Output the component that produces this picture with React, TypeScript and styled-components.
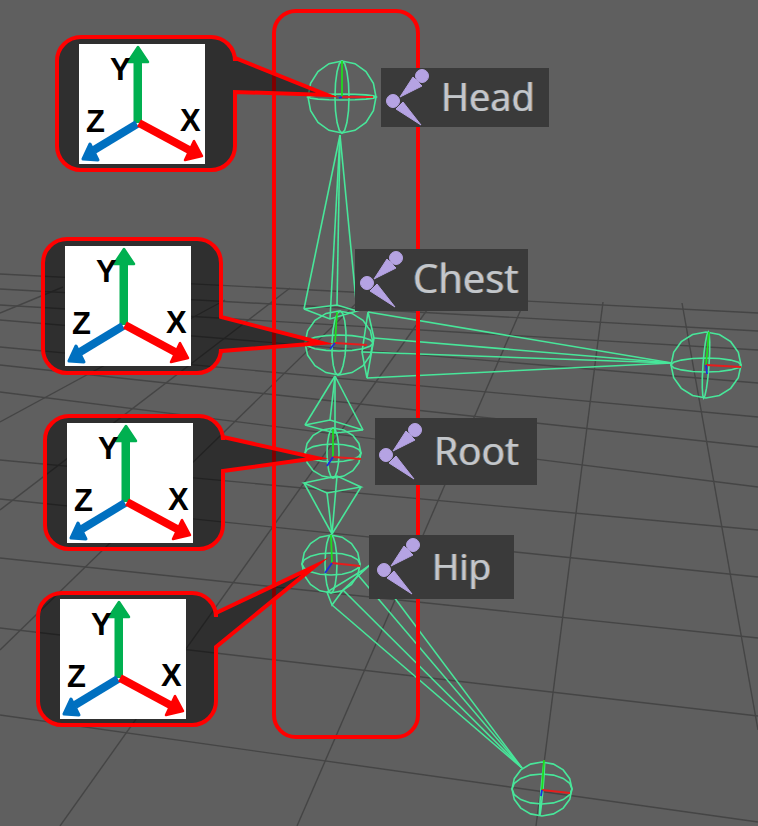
import styled, { createGlobalStyle } from "styled-components";

// Bone orientation diagram: viewport drawing, callouts and joint labels

type Point = [number, number];

const GlobalStyle = createGlobalStyle`
  html, body {
    margin: 0;
    padding: 0;
    background: #5f5f5f;
  }
`;

const Stage = styled.div`
  position: relative;
  width: 758px;
  height: 826px;
  overflow: hidden;
  background: #5f5f5f;
  font-family: "Open Sans", "Liberation Sans", sans-serif;
`;

const Viewport = styled.svg`
  position: absolute;
  inset: 0;
  display: block;
`;

const HighlightBox = styled.div`
  position: absolute;
  left: 272px;
  top: 9px;
  width: 148px;
  height: 730px;
  box-sizing: border-box;
  border: 4px solid #ff0000;
  border-radius: 24px;
`;

const Callout = styled.div<{ $x: number; $y: number; $w: number; $h: number }>`
  position: absolute;
  left: ${({ $x }) => $x}px;
  top: ${({ $y }) => $y}px;
  width: ${({ $w }) => $w}px;
  height: ${({ $h }) => $h}px;
`;

const Bubble = styled.svg`
  position: absolute;
  inset: 0;
  width: 100%;
  height: 100%;
  overflow: visible;
`;

const AxisPanel = styled.div<{ $x: number; $y: number }>`
  position: absolute;
  left: ${({ $x }) => $x}px;
  top: ${({ $y }) => $y}px;
  width: 126px;
  height: 120px;
  background: #ffffff;
`;

const AxisDrawing = styled.svg`
  display: block;
  width: 126px;
  height: 120px;
`;

const AxisLetter = styled.span<{ $x: number; $y: number }>`
  position: absolute;
  left: ${({ $x }) => $x}px;
  top: ${({ $y }) => $y}px;
  font-family: "Liberation Sans", Arial, sans-serif;
  font-weight: 700;
  font-size: 31px;
  line-height: 1;
  color: #000000;
`;

const BoneLabel = styled.div<{ $x: number; $y: number; $w: number; $h: number; $pad: number; $gap: number }>`
  position: absolute;
  left: ${({ $x }) => $x}px;
  top: ${({ $y }) => $y}px;
  width: ${({ $w }) => $w}px;
  height: ${({ $h }) => $h}px;
  display: flex;
  align-items: center;
  gap: ${({ $gap }) => $gap}px;
  padding-left: ${({ $pad }) => $pad}px;
  box-sizing: border-box;
  background: #3a3a3a;
`;

const BoneIcon = styled.svg`
  flex: none;
  display: block;
  filter: blur(0.5px);
`;

const BoneName = styled.span<{ $size: number }>`
  margin-bottom: 4px;
  font-size: ${({ $size }) => $size}px;
  line-height: 1;
  color: #c4c7ca;
  filter: blur(0.55px);
  text-shadow: -1px 0 rgba(90, 160, 230, 0.6), 1px 0 rgba(235, 165, 90, 0.6);
`;

const GRID_ROWS: [number, number][] = [
  [274, 313], [289, 331], [305, 350], [320, 383], [347, 417], [365, 447],
  [392, 487], [460, 530], [499, 577], [558, 638], [628, 716], [715, 822],
];

const GRID_SPOKES: [Point, Point][] = [
  [[60, 826], [432, 303]],
  [[297, 826], [525, 300]],
  [[603, 302], [536, 826]],
  [[682, 303], [758, 730]],
  [[0, 650], [370, 290]],
  [[0, 510], [290, 288]],
  [[0, 422], [225, 300]],
  [[0, 313], [63, 287]],
];

const BONES: { apex: Point; base: Point[]; rim: Point[] }[] = [
  {
    apex: [340, 135],
    base: [[304, 309], [337, 305], [357, 311], [330, 319]],
    rim: [[304, 309], [337, 305], [357, 311], [330, 319]],
  },
  {
    apex: [672, 363],
    base: [[368, 312], [374, 338], [367, 378], [362, 352]],
    rim: [[368, 312], [374, 338], [367, 378], [362, 352]],
  },
  {
    apex: [335, 376],
    base: [[305, 425], [330, 420], [363, 430], [335, 433]],
    rim: [[305, 425], [330, 420], [363, 430], [335, 433]],
  },
  {
    apex: [332, 534],
    base: [[304, 483], [337, 476], [361, 487], [327, 493]],
    rim: [[304, 483], [337, 476], [361, 487], [327, 493]],
  },
  // Hip to foot: the wide end of this bone sits partly under the Hip label
  {
    apex: [522, 768],
    base: [[332, 605], [343, 590], [358, 575], [370, 565]],
    rim: [[332, 605], [327, 592], [363, 570], [370, 565], [343, 590]],
  },
];

const SPHERES = [
  { cx: 342, cy: 97, rx: 34, ry: 36, lat: 3, lon: 7, tilt: 0, o: [342, 97], g: [342, 61], r: [373, 97], b: [339, 98] },
  { cx: 339, cy: 343, rx: 34, ry: 32, lat: 8, lon: 7, tilt: 2, o: [335, 343], g: [337, 312], r: [367, 345], b: [330, 349] },
  { cx: 706, cy: 365, rx: 35, ry: 33, lat: 7, lon: 3, tilt: 4, o: [706, 365], g: [709, 332], r: [741, 367], b: [707, 374] },
  { cx: 333, cy: 453, rx: 28, ry: 25, lat: 9, lon: 6, tilt: 0, o: [333, 457], g: [333, 429], r: [361, 459], b: [327, 466] },
  { cx: 331, cy: 564, rx: 29, ry: 29, lat: 11, lon: 6, tilt: 0, o: [332, 563], g: [331, 535], r: [360, 566], b: [325, 573] },
  { cx: 542, cy: 789, rx: 30, ry: 27, lat: 15, lon: 1, tilt: 5, o: [542, 790], g: [544, 760], r: [570, 793], b: [541, 796] },
];

const CALLOUTS = [
  { x: 57, y: 37, w: 178, h: 133, panel: [22, 7], tail: [21, 55, 270, 58] },
  { x: 43, y: 239, w: 178, h: 134, panel: [22, 7], tail: [78, 112, 279, 104] },
  { x: 45, y: 416, w: 178, h: 133, panel: [22, 7], tail: [21, 55, 272, 42] },
  { x: 38, y: 593, w: 178, h: 132, panel: [22, 6], tail: [20, 54, 277, -27] },
];

const LABELS = [
  { name: "Head", x: 381, y: 68, w: 168, h: 59, pad: 5, gap: 7, size: 38 },
  { name: "Chest", x: 355, y: 249, w: 173, h: 62, pad: 5, gap: 5, size: 40 },
  { name: "Root", x: 375, y: 418, w: 162, h: 67, pad: 4, gap: 7, size: 39 },
  { name: "Hip", x: 369, y: 535, w: 145, h: 64, pad: 8, gap: 7, size: 37 },
];

// Low-poly ellipse, the way the viewport draws its joint gizmos
function ring(cx: number, cy: number, rx: number, ry: number) {
  const pts: string[] = [];
  for (let i = 0; i < 16; i++) {
    const a = (i / 16) * Math.PI * 2;
    pts.push(`${(cx + rx * Math.cos(a)).toFixed(1)},${(cy + ry * Math.sin(a)).toFixed(1)}`);
  }
  return pts.join(" ");
}

function bubblePath(w: number, h: number, t0: number, t1: number, tx: number, ty: number) {
  const r = 24;
  return `M${r} 0H${w - r}A${r} ${r} 0 0 1 ${w} ${r}V${t0}L${tx} ${ty}L${w} ${t1}V${h - r}A${r} ${r} 0 0 1 ${w - r} ${h}H${r}A${r} ${r} 0 0 1 0 ${h - r}V${r}A${r} ${r} 0 0 1 ${r} 0Z`;
}

function AxisGizmo() {
  return (
    <AxisDrawing viewBox="0 0 126 120">
      <g fill="#00b050" stroke="#00b050" strokeLinejoin="round">
        <rect x="54.5" y="17" width="8.5" height="62" strokeWidth="0" />
        <polygon points="59,3 69,18 49,18" strokeWidth="2.5" />
      </g>
      <g fill="#0070c0" stroke="#0070c0" strokeLinejoin="round">
        <line x1="58" y1="80" x2="15" y2="106" strokeWidth="8" />
        <polygon points="4,115 11,100 19,116" strokeWidth="3" />
      </g>
      <g fill="#ff0000" stroke="#ff0000" strokeLinejoin="round">
        <line x1="60" y1="79" x2="112" y2="107" strokeWidth="8" />
        <polygon points="123,112 115,97 106,116" strokeWidth="2.5" />
      </g>
    </AxisDrawing>
  );
}

function JointIcon() {
  return (
    <BoneIcon width="48" height="60" viewBox="0 0 48 60" fill="#b5a3e3" stroke="#b5a3e3" strokeWidth="1" strokeLinejoin="round">
      <circle cx="36" cy="8" r="6.5" />
      <circle cx="7" cy="33" r="6.5" />
      <polygon points="14,29 27,9 36,18" />
      <polygon points="10,41 17,34 35,57" />
    </BoneIcon>
  );
}

export default function App() {
  return (
    <Stage>
      <GlobalStyle />
      <Viewport width="758" height="826" viewBox="0 0 758 826">
        <g stroke="#454545" strokeWidth="1.4" fill="none">
          {GRID_ROWS.map(([a, b], i) => (
            <line key={i} x1="0" y1={a} x2="758" y2={b} />
          ))}
          {GRID_SPOKES.map(([a, b], i) => (
            <line key={i} x1={a[0]} y1={a[1]} x2={b[0]} y2={b[1]} />
          ))}
        </g>
        <g stroke="#48e69a" strokeWidth="1.6" fill="none">
          {BONES.map((bone, i) => (
            <g key={i}>
              <polygon points={bone.rim.map((p) => p.join(",")).join(" ")} />
              {bone.base.map((p, j) => (
                <line key={j} x1={p[0]} y1={p[1]} x2={bone.apex[0]} y2={bone.apex[1]} />
              ))}
            </g>
          ))}
          {SPHERES.map((s, i) => (
            <g key={i}>
              <polygon points={ring(s.cx, s.cy, s.rx, s.ry)} />
              <polygon points={ring(s.cx, s.cy, s.rx, s.lat)} />
              <polygon
                points={ring(s.cx, s.cy, s.lon, s.ry)}
                transform={`rotate(${s.tilt} ${s.cx} ${s.cy})`}
              />
            </g>
          ))}
        </g>
        {SPHERES.map((s, i) => (
          <g key={i} strokeWidth="1.8">
            <line x1={s.o[0]} y1={s.o[1]} x2={s.g[0]} y2={s.g[1]} stroke="#1edc1e" />
            <line x1={s.o[0]} y1={s.o[1]} x2={s.r[0]} y2={s.r[1]} stroke="#e81c1c" />
            <line x1={s.o[0]} y1={s.o[1]} x2={s.b[0]} y2={s.b[1]} stroke="#1c2ce0" />
          </g>
        ))}
      </Viewport>

      <HighlightBox />

      {CALLOUTS.map((c, i) => (
        <Callout key={i} $x={c.x} $y={c.y} $w={c.w} $h={c.h}>
          <Bubble viewBox={`0 0 ${c.w} ${c.h}`}>
            <path
              d={bubblePath(c.w, c.h, c.tail[0], c.tail[1], c.tail[2], c.tail[3])}
              fill="rgba(0, 0, 0, 0.5)"
              stroke="#ff0000"
              strokeWidth="4"
              strokeMiterlimit="12"
            />
          </Bubble>
          <AxisPanel $x={c.panel[0]} $y={c.panel[1]}>
            <AxisGizmo />
            <AxisLetter $x={31} $y={10}>Y</AxisLetter>
            <AxisLetter $x={7} $y={62}>Z</AxisLetter>
            <AxisLetter $x={101} $y={61}>X</AxisLetter>
          </AxisPanel>
        </Callout>
      ))}

      {LABELS.map((l) => (
        <BoneLabel key={l.name} $x={l.x} $y={l.y} $w={l.w} $h={l.h} $pad={l.pad} $gap={l.gap}>
          <JointIcon />
          <BoneName $size={l.size}>{l.name}</BoneName>
        </BoneLabel>
      ))}
    </Stage>
  );
}
